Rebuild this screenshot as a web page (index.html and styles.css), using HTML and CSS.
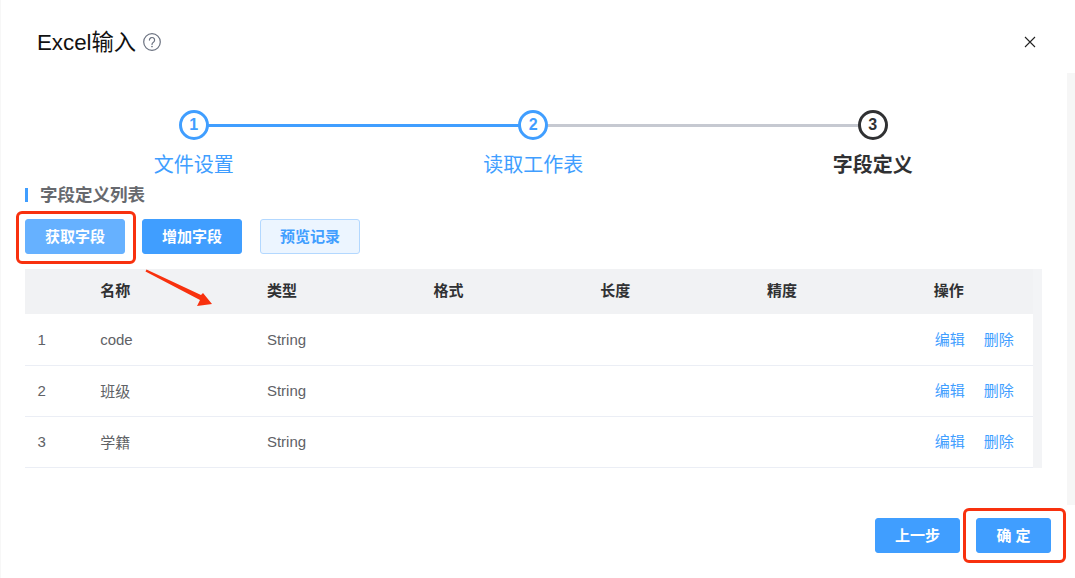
FILE: index.html
```html
<!DOCTYPE html>
<html lang="zh-CN">
<head>
<meta charset="utf-8">
<title>Excel输入</title>
<link rel="stylesheet" href="styles.css">
</head>
<body>
<div class="page">
  <main class="dialog">
    <header class="head">
      <h1 class="title">Excel输入</h1>
      <svg class="help" width="18" height="18" viewBox="0 0 18 18" fill="none" stroke="#6b7280" stroke-width="1.2"><circle cx="9" cy="9" r="8.3"/><path d="M6.4 7.1a2.6 2.6 0 1 1 4 2.2c-1 .6-1.4 1-1.4 2.1" stroke-linecap="round"/><circle cx="9" cy="13.5" r=".85" fill="#6b7280" stroke="none"/></svg>
      <svg class="close" width="12" height="12" viewBox="0 0 12 12" fill="none" stroke="#222" stroke-width="1.1"><path d="M1 1l10 10M11 1L1 11"/></svg>
    </header>

    <section class="steps">
      <div class="step done">
        <div class="track"><span class="line half-right"></span><span class="dot">1</span></div>
        <div class="step-label">文件设置</div>
      </div>
      <div class="step done">
        <div class="track"><span class="line half-left"></span><span class="line half-right grey"></span><span class="dot">2</span></div>
        <div class="step-label">读取工作表</div>
      </div>
      <div class="step current">
        <div class="track"><span class="line half-left grey"></span><span class="dot">3</span></div>
        <div class="step-label">字段定义</div>
      </div>
    </section>

    <h2 class="section-title">字段定义列表</h2>

    <div class="toolbar">
      <button class="btn btn-light-primary">获取字段</button>
      <button class="btn btn-primary">增加字段</button>
      <button class="btn btn-plain">预览记录</button>
    </div>

    <div class="table">
      <div class="row row-head">
        <span></span><span>名称</span><span>类型</span><span>格式</span><span>长度</span><span>精度</span><span>操作</span>
      </div>
      <div class="row">
        <span>1</span><span>code</span><span>String</span><span></span><span></span><span></span>
        <span class="actions"><a>编辑</a><a>删除</a></span>
      </div>
      <div class="row">
        <span>2</span><span>班级</span><span>String</span><span></span><span></span><span></span>
        <span class="actions"><a>编辑</a><a>删除</a></span>
      </div>
      <div class="row">
        <span>3</span><span>学籍</span><span>String</span><span></span><span></span><span></span>
        <span class="actions"><a>编辑</a><a>删除</a></span>
      </div>
    </div>

    <footer class="foot">
      <button class="btn btn-primary btn-prev">上一步</button>
      <button class="btn btn-primary btn-ok">确 定</button>
    </footer>
  </main>
  <div class="gutter"></div>

  <div class="mark mark-fetch"></div>
  <div class="mark mark-ok"></div>
  <svg class="arrow" width="70" height="40" viewBox="0 0 70 40"><path d="M2.5 .5L57 26L59 24L68 35L53 37L56 31L1.5 2.5Z" fill="#f8310e"/></svg>
</div>
</body>
</html>
```

FILE: styles.css
```css
* { box-sizing: border-box; }
html, body { margin: 0; padding: 0; background: #fff; }
body {
  font-family: "Liberation Sans", "Noto Sans CJK SC", sans-serif;
  color: #606266;
}
.page {
  position: relative;
  width: 1075px;
  height: 578px;
  display: flex;
  overflow: hidden;
  border-left: 1px solid #f7f7f7;
}
.dialog {
  width: 1066px;
  padding-left: 24px;
  display: flex;
  flex-direction: column;
}
.gutter {
  width: 8px;
  height: 432px;
  margin-top: 73px;
  background: #f6f6f6;
}

.head {
  height: 84px;
  display: flex;
  align-items: center;
  padding-left: 12px;
}
.title {
  margin: 2px 0 0;
  font-size: 22.3px;
  font-weight: 400;
  line-height: 30px;
  color: #111;
}
.help { margin-left: 7px; flex: none; }
.close { margin-left: auto; margin-right: 31px; margin-top: -1px; }

.steps {
  display: grid;
  grid-template-columns: repeat(3, 339.5px);
  height: 84px;
  margin-top: 26px;
  margin-left: -1px;
  width: 1018.5px;
}
.step { display: flex; flex-direction: column; align-items: center; }
.track {
  position: relative;
  width: 100%;
  height: 30px;
  display: flex;
  justify-content: center;
}
.line {
  position: absolute;
  top: 14px;
  height: 3px;
  width: 50%;
  background: #409eff;
}
.line.grey { background: #c6c9d1; }
.half-left { left: 0; }
.half-right { right: 0; }
.dot {
  position: relative;
  width: 30px;
  height: 30px;
  border: 3px solid #409eff;
  border-radius: 50%;
  background: #fff;
  color: #409eff;
  font-size: 16px;
  font-weight: 700;
  line-height: 24px;
  text-align: center;
}
.current .dot { border-color: #303133; color: #303133; }
.step-label {
  margin-top: 9px;
  font-size: 20px;
  line-height: 32px;
  color: #409eff;
}
.current .step-label { color: #303133; font-weight: 700; }

.section-title {
  margin: -9px 0 0 0;
  height: 20px;
  font-size: 17.5px;
  font-weight: 700;
  line-height: 20px;
  color: #67696e;
  display: flex;
  align-items: center;
}
.section-title::before {
  content: "";
  width: 2.5px;
  height: 14px;
  margin-right: 12.5px;
  background: #409eff;
}

.toolbar {
  display: flex;
  gap: 17px;
  margin-top: 14px;
}
.btn {
  width: 100px;
  height: 35px;
  padding: 0 0 2px;
  border: 1px solid #409eff;
  border-radius: 3px;
  background: #409eff;
  color: #fff;
  font-family: inherit;
  font-size: 15px;
  font-weight: 700;
}
.btn-light-primary { background: #66b1ff; border-color: #66b1ff; }
.btn-plain { background: #ecf5ff; border-color: #b3d8ff; color: #409eff; margin-left: 1px; }

.table {
  margin-top: 15px;
  width: 1017px;
  padding-right: 9px;
  background: #f3f4f6;
}
.row {
  display: grid;
  grid-template-columns: 62.7px repeat(5, 166.7px) 100px;
  align-items: center;
  height: 51px;
  padding: 0 0 2px 12.5px;
  background: #fff;
  border-bottom: 1px solid #ebeef5;
  font-size: 15px;
  color: #606266;
}
.row-head {
  height: 46px;
  padding-bottom: 4px;
  background: #f1f2f4;
  border-bottom: 1px solid #fff;
  font-weight: 700;
  color: #303133;
}
.actions { display: flex; gap: 19px; margin: 0 0 2px 1px; }
.actions a { color: #409eff; }

.foot {
  display: flex;
  gap: 16px;
  margin-top: 50px;
  padding-left: 850px;
}
.btn-prev { width: 85px; }
.btn-ok { width: 75px; }

.mark {
  position: absolute;
  border: 3px solid #f8310e;
  border-radius: 6px;
}
.mark-fetch { left: 15px; top: 211px; width: 120px; height: 53px; }
.mark-ok { left: 962px; top: 508px; width: 103px; height: 55px; }
.arrow { position: absolute; left: 143px; top: 269px; }
```
